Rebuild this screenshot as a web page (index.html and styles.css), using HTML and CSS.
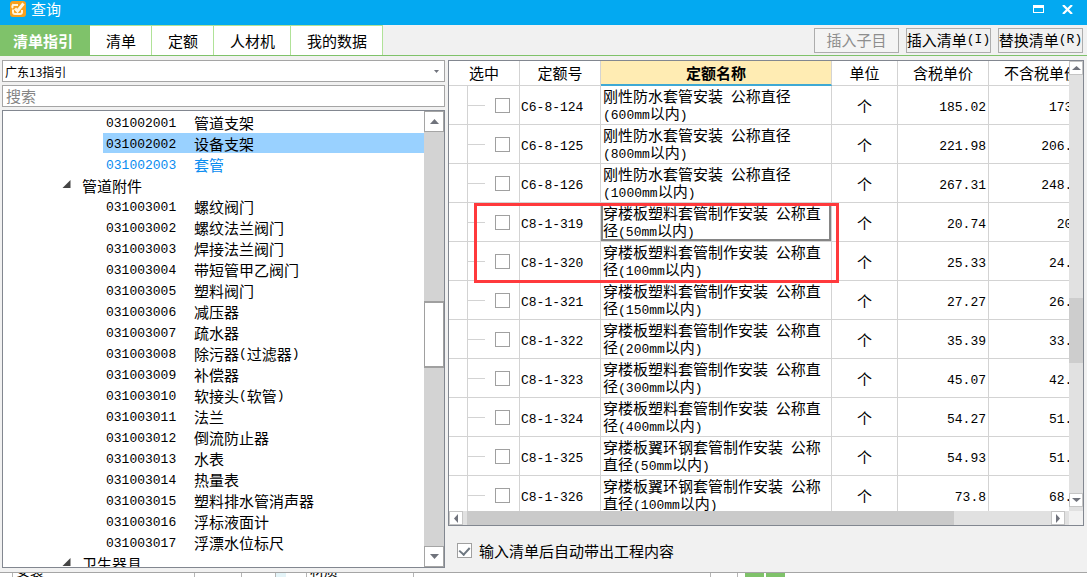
FILE: index.html
```html
<!DOCTYPE html>
<html lang="zh-CN">
<head>
<meta charset="utf-8">
<title>查询</title>
<link rel="stylesheet" href="styles.css">
</head>
<body>
<div class="window">
  <header class="titlebar">
    <svg class="app-icon" width="16" height="16" viewBox="0 0 16 16"><rect width="16" height="16" rx="3" fill="#f7a01d"/><path d="M3.500 3Q1.500 5.500 3 7M3 8.500v2.500q0 2 2 2h5q2 0 2-2V9M3.500 4h4.500" fill="none" stroke="#fff4dc" stroke-width="2"/><path d="M5 7.500l2.500 2.500 6-7.500" fill="none" stroke="#fff4dc" stroke-width="3"/></svg>
    <h1 class="title">查询</h1>
    <button class="win-btn" aria-label="最大化"><svg width="11" height="8" viewBox="0 0 11 8"><path d="M0 0h11v8H0zM1 3v4h9V3z" fill="#fff" fill-rule="evenodd"/></svg></button>
    <button class="win-btn" aria-label="关闭"><svg width="11" height="9" viewBox="0 0 11 9"><path d="M1 0l9 9M10 0L1 9" stroke="#fff" stroke-width="2.200"/></svg></button>
  </header>
  <nav class="toolbar">
    <div class="tabs">
      <button class="tab tab-active">清单指引</button>
      <button class="tab">清单</button>
      <button class="tab">定额</button>
      <button class="tab">人材机</button>
      <button class="tab">我的数据</button>
    </div>
    <div class="actions">
      <button class="action" disabled>插入子目</button>
      <button class="action">插入清单<span class="num">(I)</span></button>
      <button class="action">替换清单<span class="num">(R)</span></button>
    </div>
  </nav>
  <main class="content">
    <section class="left">
      <div class="select-wrap">
        <select class="field guide" aria-label="指引"><option>广东13指引</option></select>
        <svg class="select-arrow" width="5" height="3" viewBox="0 0 5 3"><path d="M0 0h5L2.500 3z" fill="#70737c"/></svg>
      </div>
      <input class="field search" type="text" placeholder="搜索" aria-label="搜索">
      <div class="tree-box">
        <ul class="tree">
          <li class="leaf"><span class="num code">031002001</span>管道支架</li>
          <li class="leaf leaf-selected"><span class="num code">031002002</span>设备支架</li>
          <li class="leaf leaf-link"><span class="num code">031002003</span>套管</li>
          <li class="group"><svg class="caret" width="9" height="9" viewBox="0 0 9 9"><path d="M8.500 0v8H.5z" fill="#444"/></svg>管道附件</li>
          <li class="leaf"><span class="num code">031003001</span>螺纹阀门</li>
          <li class="leaf"><span class="num code">031003002</span>螺纹法兰阀门</li>
          <li class="leaf"><span class="num code">031003003</span>焊接法兰阀门</li>
          <li class="leaf"><span class="num code">031003004</span>带短管甲乙阀门</li>
          <li class="leaf"><span class="num code">031003005</span>塑料阀门</li>
          <li class="leaf"><span class="num code">031003006</span>减压器</li>
          <li class="leaf"><span class="num code">031003007</span>疏水器</li>
          <li class="leaf"><span class="num code">031003008</span>除污器<span class="num">(</span>过滤器<span class="num">)</span></li>
          <li class="leaf"><span class="num code">031003009</span>补偿器</li>
          <li class="leaf"><span class="num code">031003010</span>软接头<span class="num">(</span>软管<span class="num">)</span></li>
          <li class="leaf"><span class="num code">031003011</span>法兰</li>
          <li class="leaf"><span class="num code">031003012</span>倒流防止器</li>
          <li class="leaf"><span class="num code">031003013</span>水表</li>
          <li class="leaf"><span class="num code">031003014</span>热量表</li>
          <li class="leaf"><span class="num code">031003015</span>塑料排水管消声器</li>
          <li class="leaf"><span class="num code">031003016</span>浮标液面计</li>
          <li class="leaf"><span class="num code">031003017</span>浮漂水位标尺</li>
          <li class="group"><svg class="caret" width="9" height="9" viewBox="0 0 9 9"><path d="M8.500 0v8H.5z" fill="#444"/></svg>卫生器具</li>
        </ul>
        <div class="tree-scroll">
          <button class="tree-step" aria-label="向上"><svg width="9" height="5" viewBox="0 0 9 5"><path d="M4.500 0L9 5H0z" fill="#70737c"/></svg></button>
          <div class="tree-track"><div class="tree-thumb"></div></div>
          <button class="tree-step" aria-label="向下"><svg width="9" height="5" viewBox="0 0 9 5"><path d="M0 0h9L4.500 5z" fill="#70737c"/></svg></button>
        </div>
      </div>
    </section>
    <section class="right">
      <div class="grid-box">
        <div class="viewport">
          <table class="grid">
            <colgroup><col class="c-line"><col class="c-check"><col class="c-code"><col><col class="c-unit"><col class="c-tax"><col class="c-notax"></colgroup>
            <thead><tr><th colspan="2">选中</th><th>定额号</th><th class="sorted">定额名称</th><th>单位</th><th>含税单价</th><th>不含税单价</th></tr></thead>
            <tbody>
              <tr><td></td><td class="pick"><input type="checkbox" class="box" aria-label="C6-8-124"></td><td class="num">C6-8-124</td><td class="name">刚性防水套管安装<span class="num"> </span>公称直径<br><span class="num">(600mm</span>以内<span class="num">)</span></td><td class="unit">个</td><td class="num price">185.02</td><td class="num price">173&nbsp;&nbsp;</td></tr>
              <tr><td></td><td class="pick"><input type="checkbox" class="box" aria-label="C6-8-125"></td><td class="num">C6-8-125</td><td class="name">刚性防水套管安装<span class="num"> </span>公称直径<br><span class="num">(800mm</span>以内<span class="num">)</span></td><td class="unit">个</td><td class="num price">221.98</td><td class="num price">206.&nbsp;&nbsp;</td></tr>
              <tr><td></td><td class="pick"><input type="checkbox" class="box" aria-label="C6-8-126"></td><td class="num">C6-8-126</td><td class="name">刚性防水套管安装<span class="num"> </span>公称直径<br><span class="num">(1000mm</span>以内<span class="num">)</span></td><td class="unit">个</td><td class="num price">267.31</td><td class="num price">248.&nbsp;&nbsp;</td></tr>
              <tr><td></td><td class="pick"><input type="checkbox" class="box" aria-label="C8-1-319"><div class="marker"></div></td><td class="num">C8-1-319</td><td class="name name-focus">穿楼板塑料套管制作安装<span class="num"> </span>公称直<br>径<span class="num">(50mm</span>以内<span class="num">)</span></td><td class="unit">个</td><td class="num price">20.74</td><td class="num price">20&nbsp;&nbsp;</td></tr>
              <tr><td></td><td class="pick"><input type="checkbox" class="box" aria-label="C8-1-320"></td><td class="num">C8-1-320</td><td class="name">穿楼板塑料套管制作安装<span class="num"> </span>公称直<br>径<span class="num">(100mm</span>以内<span class="num">)</span></td><td class="unit">个</td><td class="num price">25.33</td><td class="num price">24.&nbsp;&nbsp;</td></tr>
              <tr><td></td><td class="pick"><input type="checkbox" class="box" aria-label="C8-1-321"></td><td class="num">C8-1-321</td><td class="name">穿楼板塑料套管制作安装<span class="num"> </span>公称直<br>径<span class="num">(150mm</span>以内<span class="num">)</span></td><td class="unit">个</td><td class="num price">27.27</td><td class="num price">26.&nbsp;&nbsp;</td></tr>
              <tr><td></td><td class="pick"><input type="checkbox" class="box" aria-label="C8-1-322"></td><td class="num">C8-1-322</td><td class="name">穿楼板塑料套管制作安装<span class="num"> </span>公称直<br>径<span class="num">(200mm</span>以内<span class="num">)</span></td><td class="unit">个</td><td class="num price">35.39</td><td class="num price">33.&nbsp;&nbsp;</td></tr>
              <tr><td></td><td class="pick"><input type="checkbox" class="box" aria-label="C8-1-323"></td><td class="num">C8-1-323</td><td class="name">穿楼板塑料套管制作安装<span class="num"> </span>公称直<br>径<span class="num">(300mm</span>以内<span class="num">)</span></td><td class="unit">个</td><td class="num price">45.07</td><td class="num price">42.&nbsp;&nbsp;</td></tr>
              <tr><td></td><td class="pick"><input type="checkbox" class="box" aria-label="C8-1-324"></td><td class="num">C8-1-324</td><td class="name">穿楼板塑料套管制作安装<span class="num"> </span>公称直<br>径<span class="num">(400mm</span>以内<span class="num">)</span></td><td class="unit">个</td><td class="num price">54.27</td><td class="num price">51.&nbsp;&nbsp;</td></tr>
              <tr><td></td><td class="pick"><input type="checkbox" class="box" aria-label="C8-1-325"></td><td class="num">C8-1-325</td><td class="name">穿楼板翼环钢套管制作安装<span class="num"> </span>公称<br>直径<span class="num">(50mm</span>以内<span class="num">)</span></td><td class="unit">个</td><td class="num price">54.93</td><td class="num price">51.&nbsp;&nbsp;</td></tr>
              <tr><td></td><td class="pick"><input type="checkbox" class="box" aria-label="C8-1-326"></td><td class="num">C8-1-326</td><td class="name">穿楼板翼环钢套管制作安装<span class="num"> </span>公称<br>直径<span class="num">(100mm</span>以内<span class="num">)</span></td><td class="unit">个</td><td class="num price">73.8</td><td class="num price">68.&nbsp;&nbsp;</td></tr>
            </tbody>
          </table>
        </div>
        <div class="vbar">
          <button class="step" aria-label="向上"><svg width="9" height="4" viewBox="0 0 9 4"><path d="M4.500 0L9 4H0z" fill="#70737c"/></svg></button>
          <div class="vtrack"><div class="vthumb"></div></div>
          <button class="step" aria-label="向下"><svg width="9" height="4" viewBox="0 0 9 4"><path d="M0 0h9L4.500 4z" fill="#70737c"/></svg></button>
        </div>
        <div class="hbar">
          <button class="step" aria-label="向左"><svg width="4" height="9" viewBox="0 0 4 9"><path d="M4 0v9L0 4.500z" fill="#70737c"/></svg></button>
          <div class="htrack"><div class="hthumb"></div></div>
          <button class="step" aria-label="向右"><svg width="4" height="9" viewBox="0 0 4 9"><path d="M0 0v9l4-4.500z" fill="#70737c"/></svg></button>
        </div>
        <div class="corner"></div>
      </div>
      <label class="option"><input type="checkbox" class="box" checked>输入清单后自动带出工程内容</label>
    </section>
  </main>
  <footer class="under">
    <div class="under-cell under-lead"></div>
    <div class="under-cell under-first"><span>安装</span></div>
    <div class="under-cell under-drop"></div>
    <div class="under-cell under-gap"></div>
    <div class="under-cell under-lead under-blue"></div>
    <div class="under-cell under-mat"><span>材质</span></div>
    <div class="under-cell under-rest"></div>
    <div class="under-cell under-side"></div>
    <div class="under-tabs"><i class="chip"></i><i class="chip"></i></div>
  </footer>
</div>
</body>
</html>
```
FILE: styles.css
```css
* { box-sizing: border-box; }
body { margin: 0; font: 15px/21px "Noto Sans CJK SC", sans-serif; color: #000; }
button, input, select { font: inherit; color: inherit; margin: 0; padding: 0; }
button { border: 0; background: none; }
svg { display: block; flex: none; }
.num { font-family: "Liberation Mono", "Noto Sans CJK SC", monospace; font-size: 13px; }
.window { height: 100vh; display: flex; flex-direction: column; overflow: hidden; background: #f1f1f1; }

.titlebar { flex: none; height: 25px; display: flex; align-items: flex-start; padding: 0 12px 0 10px; background: #03a9f1; color: #fff; }
.app-icon { margin-top: 1px; }
.title { flex: 1; margin: 0 0 0 5px; font-size: 15px; font-weight: 400; line-height: 18px; }
.win-btn { width: 15px; height: 18px; display: flex; align-items: center; justify-content: center; margin-left: 14px; }

.toolbar { flex: none; height: 31px; display: flex; justify-content: space-between; border-bottom: 1px solid #7fc26a; }
.tabs { display: flex; }
.tab { background: #fff; border: solid #b0e298; border-width: 1px 1px 0 0; padding: 0 15px 0 16px; white-space: nowrap; line-height: 29px; }
.tab-active { background: #7fc26a; border-color: #7fc26a; color: #fff; font-weight: 700; padding: 0 16px 0 13px; }
.actions { display: flex; gap: 7px; padding: 3px 4px 0 0; }
.action { width: 85px; height: 25px; border: 1px solid #adadad; white-space: nowrap; line-height: 22px; background: #f1f1f1; display: flex; justify-content: center; }
.action:disabled { color: #8e8e8e; background: #f4f4f4; }

.content { flex: 1; min-height: 0; display: flex; gap: 2px; padding: 4px 3px 0 2px; }
.left { flex: 443 1 0; min-width: 0; display: flex; flex-direction: column; gap: 3px; padding-bottom: 4px; }
.select-wrap { position: relative; }
.field { display: block; width: 100%; height: 22px; border: 1px solid #a5a5a5; border-radius: 0; background: #fff; padding: 0 3px; outline: 0; }
.guide { appearance: none; font-size: 12px; padding: 0 2px 2px; }
.search { padding-bottom: 2px; }
.select-arrow { position: absolute; right: 6px; top: 10px; }
.search::placeholder { color: #858585; opacity: 1; }
.tree-box { flex: 1; min-height: 0; display: flex; border: 1px solid #828790; background: #fff; overflow: hidden; }
.tree { flex: 1; margin: 0; padding: 1px 0 0 59px; list-style: none; }
.leaf { height: 21px; margin-left: 41px; padding-left: 3px; display: flex; align-items: center; }
.code { width: 88px; padding-top: 2px; }
.leaf-selected { background: #99d1ff; background-clip: padding-box; border-bottom: 1px solid #fff; }
.leaf-link { color: #0a8cf0; }
.group { height: 21px; display: flex; align-items: center; gap: 11px; }
.caret { margin-bottom: 3px; }
.tree-scroll { width: 20px; display: flex; flex-direction: column; }
.tree-step { flex: none; height: 21px; border: 1px solid #a5a5a5; background: #fff; display: flex; align-items: center; justify-content: center; }
.tree-track { flex: 1; background: #d3d3d3; display: grid; grid-template-rows: 169fr 66fr 178fr; }
.tree-thumb { grid-row: 2; border: solid #a0a0a0; border-width: 2px 1px; background: #fff; }

.right { flex: 637 1 0; min-width: 0; display: flex; flex-direction: column; }
.grid-box { flex: 1; min-height: 0; display: grid; grid-template: minmax(0, 1fr) 14px / minmax(0, 1fr) 14px; border: 1px solid #828790; margin-left: 1px; background: #fff; }
.viewport { overflow: hidden; }
.grid { width: calc(100% + 26px); table-layout: fixed; border-collapse: separate; border-spacing: 0; }
.c-line { width: 19px; }
.c-check { width: 52px; }
.c-code { width: 81px; }
.c-unit { width: 66px; }
.c-tax { width: 91px; }
.c-notax { width: 106px; }
.grid th { height: 25px; padding: 0 0 2px; font-weight: 400; line-height: 21px; border: solid #d3d3d3; border-width: 0 1px 1px 0; }
.grid th.sorted { background: #ffecb3; font-weight: 700; border-bottom: 2px solid #3fa9d4; padding-bottom: 1px; }
.grid td { height: 39px; padding: 5px 0 0 1px; border: solid #d3d3d3; border-width: 0 1px 1px 0; white-space: nowrap; overflow: hidden; }
.grid td.pick { position: relative; padding: 0 9px 0 0; overflow: visible; background: linear-gradient(#d3d3d3, #d3d3d3) 0 50% / 17px 1px no-repeat; }
.grid td.name { padding: 1px 0 0 2px; line-height: 17px; vertical-align: top; }
.name .num { line-height: 0; }
.grid td.name-focus { box-shadow: inset 0 0 0 2px #858585; }
.grid td.unit { text-align: center; padding: 0; }
.grid td.price { text-align: right; padding-right: 2px; }
.grid td.price:last-child { padding-right: 6px; }
.box { appearance: none; display: block; flex: none; width: 15px; height: 15px; border: 1px solid #a0a0a0; background: #fff; margin-left: auto; }
.box:checked { display: grid; place-items: center; }
.box:checked::after { content: ""; width: 5px; height: 8px; border: solid #6e7780; border-width: 0 2px 2px 0; transform: rotate(42deg); margin-bottom: 2px; }
.marker { position: absolute; z-index: 2; left: 6px; top: 0; width: 365px; height: 80px; border: 3px solid #ff393c; pointer-events: none; }
.vbar { display: flex; flex-direction: column; background: #e1e1e1; padding-bottom: 4px; }
.step { flex: none; width: 14px; height: 14px; border: 1px solid #c5c5c5; background: #fff; display: flex; align-items: center; justify-content: center; }
.vtrack { flex: 1; display: grid; grid-template-rows: 223fr 65fr 130fr; }
.vthumb { grid-row: 2; background: #cdcdcd; }
.hbar { display: flex; background: #e1e1e1; padding-right: 4px; }
.htrack { flex: 1; display: grid; grid-template-columns: 4fr 487fr 97fr; }
.hthumb { grid-column: 2; background: #cacaca; }
.corner { background: #f1f1f1; }
.option { flex: none; height: 46px; padding: 3px 0 0 10px; display: flex; align-items: center; gap: 7px; }
.option .box { margin: 0; }

.under { flex: none; height: 5px; display: flex; border-top: 1px solid #a5a5a5; background: #fff; overflow: hidden; font-size: 14px; line-height: 14px; }
.under-cell { height: 4px; border-right: 1px solid #b5b5b5; }
.under-cell span { display: block; margin: -10px 0 0 3px; }
.under-lead { width: 13px; }
.under-first { width: 182px; }
.under-drop { width: 47px; }
.under-gap { width: 34px; }
.under-blue { width: 31px; border-left: 10px solid #e4f4f8; }
.under-mat { width: 107px; }
.under-rest { width: 297px; }
.under-side { width: 27px; }
.under-tabs { display: flex; gap: 2px; padding-left: 7px; }
.chip { width: 19px; height: 4px; background: #7fc26a; }
```
